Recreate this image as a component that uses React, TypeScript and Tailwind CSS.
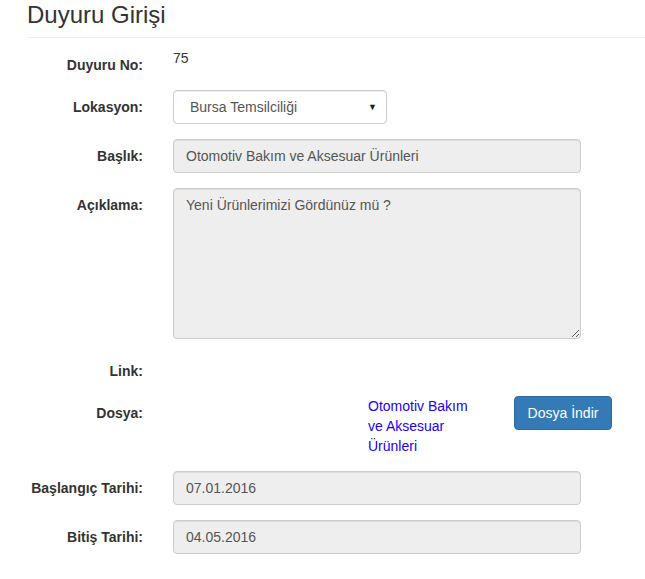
export default function App() {
  const font = { fontFamily: '"Liberation Sans", Arial, sans-serif' };
  return (
    <div className="min-h-[579px] bg-white text-[14px] leading-[20px] text-[#333]" style={font}>
      {/* Header */}
      <div className="ml-[27px] border-b border-[#eee] pt-[2px] pb-[9px]">
        <h3 className="text-[24px] leading-[26px] font-normal text-[#333]">Duyuru Girişi</h3>
      </div>

      <div className="pt-[10px]">
        {/* Duyuru No */}
        <div className="mb-[15px] flex">
          <label className="w-[143px] shrink-0 pt-[7px] text-right font-bold">Duyuru No:</label>
          <div className="ml-[30px] h-[27px]">75</div>
        </div>

        {/* Lokasyon */}
        <div className="mb-[15px] flex">
          <label className="w-[143px] shrink-0 pt-[7px] text-right font-bold">Lokasyon:</label>
          <div className="ml-[30px] flex h-[34px] w-[214px] items-center justify-between rounded-[4px] border border-[#ccc] bg-white pl-[16px] pr-[9px] text-[#555] shadow-[inset_0_1px_1px_rgba(0,0,0,0.075)]">
            <span>Bursa Temsilciliği</span>
            <span className="text-[9px] leading-none text-[#222]">▼</span>
          </div>
        </div>

        {/* Başlık */}
        <div className="mb-[15px] flex">
          <label className="w-[143px] shrink-0 pt-[7px] text-right font-bold">Başlık:</label>
          <div className="ml-[30px] flex h-[34px] w-[408px] items-center rounded-[4px] border border-[#ccc] bg-[#eee] px-[12px] text-[#555] shadow-[inset_0_1px_1px_rgba(0,0,0,0.075)]">
            Otomotiv Bakım ve Aksesuar Ürünleri
          </div>
        </div>

        {/* Açıklama */}
        <div className="mb-[15px] flex">
          <label className="w-[143px] shrink-0 pt-[7px] text-right font-bold">Açıklama:</label>
          <textarea
            readOnly
            defaultValue="Yeni Ürünlerimizi Gördünüz mü ?"
            className="ml-[30px] block h-[151px] w-[408px] rounded-[4px] border border-[#ccc] bg-[#eee] px-[12px] py-[6px] text-[#555] shadow-[inset_0_1px_1px_rgba(0,0,0,0.075)] outline-none"
            style={font}
          />
        </div>

        {/* Link */}
        <div className="mb-[15px] flex">
          <label className="w-[143px] shrink-0 pt-[7px] text-right font-bold">Link:</label>
          <div className="h-[27px]" />
        </div>

        {/* Dosya */}
        <div className="mb-[15px] flex">
          <label className="w-[143px] shrink-0 pt-[7px] text-right font-bold">Dosya:</label>
          <a href="#" className="ml-[225px] w-[116px] text-[#2200ee]">
            Otomotiv Bakım ve Aksesuar Ürünleri
          </a>
          <button className="ml-[30px] h-[34px] w-[98px] rounded-[4px] border border-[#2e6da4] bg-[#337ab7] text-white">
            Dosya İndir
          </button>
        </div>

        {/* Başlangıç Tarihi */}
        <div className="mb-[15px] flex">
          <label className="w-[143px] shrink-0 pt-[7px] text-right font-bold">Başlangıç Tarihi:</label>
          <div className="ml-[30px] flex h-[34px] w-[408px] items-center rounded-[4px] border border-[#ccc] bg-[#eee] px-[12px] text-[#555] shadow-[inset_0_1px_1px_rgba(0,0,0,0.075)]">
            07.01.2016
          </div>
        </div>

        {/* Bitiş Tarihi */}
        <div className="mb-[15px] flex">
          <label className="w-[143px] shrink-0 pt-[7px] text-right font-bold">Bitiş Tarihi:</label>
          <div className="ml-[30px] flex h-[34px] w-[408px] items-center rounded-[4px] border border-[#ccc] bg-[#eee] px-[12px] text-[#555] shadow-[inset_0_1px_1px_rgba(0,0,0,0.075)]">
            04.05.2016
          </div>
        </div>
      </div>
    </div>
  );
}
